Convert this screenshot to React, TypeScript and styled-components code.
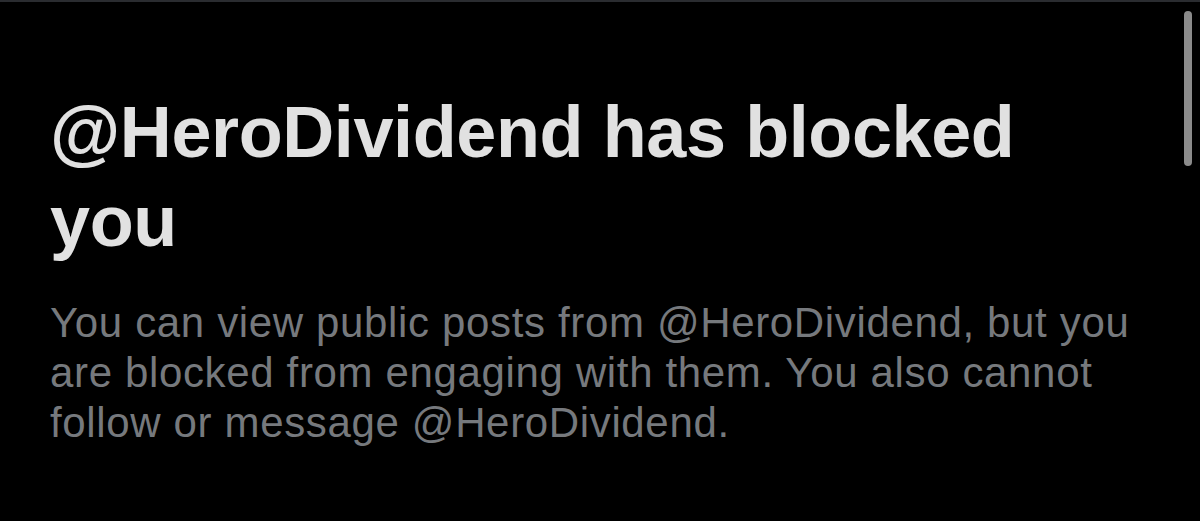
import React from "react";
import styled, { createGlobalStyle } from "styled-components";

const Global = createGlobalStyle`
  html, body {
    margin: 0;
    padding: 0;
    background: #000;
  }
  body {
    width: 1200px;
    height: 521px;
    overflow: hidden;
  }
`;

const Screen = styled.main`
  position: relative;
  width: 1200px;
  height: 521px;
  box-sizing: border-box;
  background: #000;
  border-top: 2px solid #2a2c30;
  padding: 86px 40px 0 50px;
  display: flex;
  flex-direction: column;
  gap: 32px;
`;

const Title = styled.h1`
  margin: 0;
  font-family: "Liberation Sans", Arial, sans-serif;
  font-weight: 700;
  font-size: 72px;
  line-height: 89px;
  letter-spacing: -0.4px;
  color: #e1e1e1;
`;

const Description = styled.p`
  margin: 0;
  font-family: "Liberation Sans", Arial, sans-serif;
  font-weight: 400;
  font-size: 42px;
  line-height: 50px;
  letter-spacing: 0.65px;
  color: #76797d;
`;

const ScrollThumb = styled.div`
  position: absolute;
  top: 9px;
  right: 8px;
  width: 8px;
  height: 155px;
  border-radius: 4px;
  background: #8b8b8b;
`;

export default function App() {
  return (
    <>
      <Global />
      <Screen>
        <Title>
          @HeroDividend has blocked
          <br />
          you
        </Title>
        <Description>
          You can view public posts from @HeroDividend, but you
          <br />
          are blocked from engaging with them. You also cannot
          <br />
          follow or message @HeroDividend.
        </Description>
        <ScrollThumb />
      </Screen>
    </>
  );
}
